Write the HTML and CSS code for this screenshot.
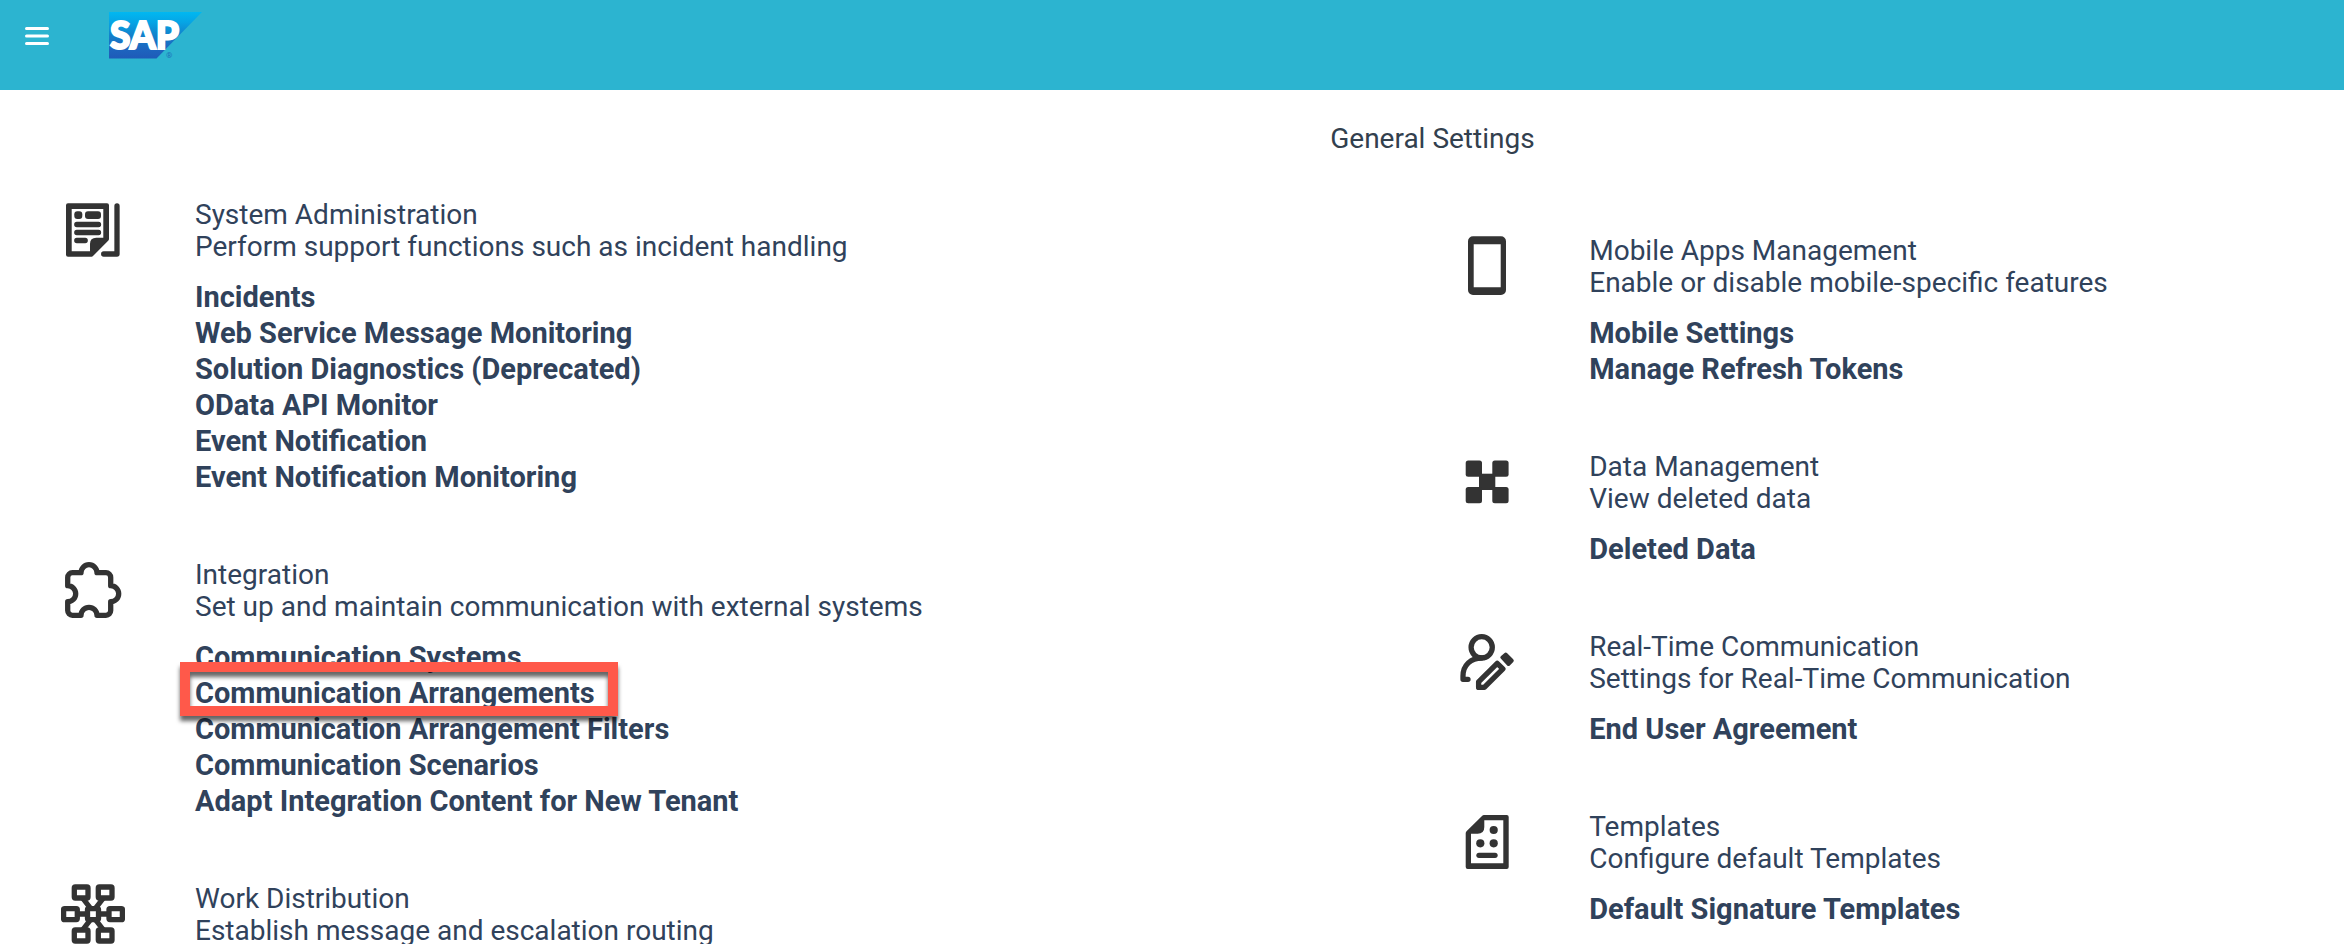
FILE: index.html
```html
<!DOCTYPE html>
<html lang="en">
<head>
<meta charset="utf-8">
<title>Administrator</title>
<link rel="stylesheet" href="styles.css">
</head>
<body>
<header class="shell">
  <button class="menu" type="button" aria-label="Menu">
    <svg width="24" height="18" viewBox="0 0 24 18" fill="none" stroke="currentColor" stroke-width="3" stroke-linecap="round"><path d="M1.500 1.500h21M1.500 9h21M1.500 16.500h21"/></svg>
  </button>
  <a class="logo" href="#" aria-label="SAP">
    <svg width="94" height="48" viewBox="0 0 94 48">
      <defs><linearGradient id="sap" x1="0" y1="0" x2="0" y2="1"><stop offset="0" stop-color="#00b8f1"/><stop offset=".22" stop-color="#06a5e5"/><stop offset=".5" stop-color="#1281cb"/><stop offset=".8" stop-color="#1d65bf"/><stop offset="1" stop-color="#1f5bb8"/></linearGradient></defs>
      <path d="M0 0h93L47.500 46.500H0z" fill="url(#sap)"/>
      <text class="logo-word" x="1" y="37">SAP</text>
      <text class="logo-mark" x="57" y="46">®</text>
    </svg>
  </a>
</header>
<main class="settings">
  <div class="column">
    <section class="group">
      <svg class="icon" viewBox="0 0 64 64">
        <path fill-rule="evenodd" d="M7 5.300h39a2 2 0 0 1 2 2V41a2 2 0 0 1-.6 1.400L32 58a2 2 0 0 1-1.400.7H7a2 2 0 0 1-2-2V7.300a2 2 0 0 1 2-2zM10.700 11v42.300H29V46q0-6.300 6.300-6.300h7V11z"/>
        <rect x="13.300" y="13.300" width="8" height="7.700" rx="3"/><rect x="24" y="13.300" width="16" height="7.700" rx="3"/>
        <path class="line" d="M15.800 26.500h21.700M15.800 34.500h21.700M15.800 42.500h8.400M56 8v48H42.700"/>
      </svg>
      <div class="body">
        <h2 class="title">System Administration</h2>
        <p class="desc">Perform support functions such as incident handling</p>
        <ul class="links">
          <li><a href="#">Incidents</a></li>
          <li><a href="#">Web Service Message Monitoring</a></li>
          <li><a href="#">Solution Diagnostics (Deprecated)</a></li>
          <li><a href="#">OData API Monitor</a></li>
          <li><a href="#">Event Notification</a></li>
          <li><a href="#">Event Notification Monitoring</a></li>
        </ul>
      </div>
    </section>
    <section class="group">
      <svg class="icon" viewBox="0 0 64 64">
        <path class="line" d="M11.400 14.700H20A8 8 0 0 1 36 14.700H45a4.700 4.700 0 0 1 4.700 4.700V27.700A8 8 0 0 1 49.700 43.700V52.600a4.700 4.700 0 0 1-4.700 4.700H36A8 8 0 0 0 20 57.300H11.400a4.700 4.700 0 0 1-4.700-4.700V43.700A8 8 0 0 0 6.700 27.700V19.400a4.700 4.700 0 0 1 4.700-4.700z"/>
      </svg>
      <div class="body">
        <h2 class="title">Integration</h2>
        <p class="desc">Set up and maintain communication with external systems</p>
        <ul class="links">
          <li><a href="#">Communication Systems</a></li>
          <li class="marked"><a href="#">Communication Arrangements</a></li>
          <li><a href="#">Communication Arrangement Filters</a></li>
          <li><a href="#">Communication Scenarios</a></li>
          <li><a href="#">Adapt Integration Content for New Tenant</a></li>
        </ul>
      </div>
    </section>
    <section class="group">
      <svg class="icon" viewBox="0 0 64 64">
        <path class="line" d="M20 14L32 29.500L44 14M20 50L32 34.500L44 50M16 32h32"/>
        <g class="nodes">
          <rect x="13.300" y="5" width="13.700" height="11" rx="1"/><rect x="37.300" y="5" width="13.700" height="11" rx="1"/>
          <rect x="2.600" y="26.600" width="13.700" height="11" rx="1"/><rect x="48" y="26.600" width="13.400" height="11" rx="1"/>
          <rect x="26.500" y="26.600" width="11" height="11" rx="1"/>
          <rect x="13.300" y="48" width="13.700" height="11" rx="1"/><rect x="37.300" y="48" width="13.700" height="11" rx="1"/>
        </g>
      </svg>
      <div class="body">
        <h2 class="title">Work Distribution</h2>
        <p class="desc">Establish message and escalation routing</p>
      </div>
    </section>
  </div>
  <div class="column column-general">
    <h1 class="heading">General Settings</h1>
    <section class="group">
      <svg class="icon" viewBox="0 0 64 64">
        <path fill-rule="evenodd" d="M18 2.300h28a5 5 0 0 1 5 5V56a5 5 0 0 1-5 5H18a5 5 0 0 1-5-5V7.300a5 5 0 0 1 5-5zM18.700 10.300v43h27v-43z"/>
      </svg>
      <div class="body">
        <h2 class="title">Mobile Apps Management</h2>
        <p class="desc">Enable or disable mobile-specific features</p>
        <ul class="links">
          <li><a href="#">Mobile Settings</a></li>
          <li><a href="#">Manage Refresh Tokens</a></li>
        </ul>
      </div>
    </section>
    <section class="group">
      <svg class="icon" viewBox="0 0 64 64">
        <rect x="10.700" y="10.400" width="16.300" height="16.300" rx="2.500"/><rect x="37.300" y="10.400" width="16.300" height="16.300" rx="2.500"/>
        <rect x="24" y="23.700" width="16.300" height="16.300"/>
        <rect x="10.700" y="37" width="16.300" height="16.300" rx="2.500"/><rect x="37.300" y="37" width="16.300" height="16.300" rx="2.500"/>
      </svg>
      <div class="body">
        <h2 class="title">Data Management</h2>
        <p class="desc">View deleted data</p>
        <ul class="links">
          <li><a href="#">Deleted Data</a></li>
        </ul>
      </div>
    </section>
    <section class="group">
      <svg class="icon" viewBox="0 0 64 64">
        <circle class="line" cx="26.700" cy="17.300" r="10.600"/>
        <path class="line" d="M13 49.300H8V46C8 35 16 28 26.700 28M23.600 57.400V51.800L42.200 33.300L47.900 38.900L29.300 57.400z"/>
        <path d="M49.300 23.200q1.400-1.400 2.900 0l6 6q1.400 1.400 0 2.900l-3.400 3.400q-1.400 1.100-2.600 0l-6.400-6.900q-1.100-1.200 0-2.300z"/>
      </svg>
      <div class="body">
        <h2 class="title">Real-Time Communication</h2>
        <p class="desc">Settings for Real-Time Communication</p>
        <ul class="links">
          <li><a href="#">End User Agreement</a></li>
        </ul>
      </div>
    </section>
    <section class="group">
      <svg class="icon" viewBox="0 0 64 64">
        <path fill-rule="evenodd" d="M29 5h22.700a2 2 0 0 1 2 2v50a2 2 0 0 1-2 2h-39a2 2 0 0 1-2-2V23.300a3 3 0 0 1 .8-2L27 6a3 3 0 0 1 2-1zM29.300 10.300V17q0 6.700-6.700 6.700H16v29.600h32.300v-43z"/>
        <circle cx="38.700" cy="20" r="4.100"/><circle cx="25.300" cy="33.300" r="4.100"/><circle cx="38.700" cy="33.300" r="4.100"/>
        <path class="line" d="M24 45.300h16"/>
      </svg>
      <div class="body">
        <h2 class="title">Templates</h2>
        <p class="desc">Configure default Templates</p>
        <ul class="links">
          <li><a href="#">Default Signature Templates</a></li>
        </ul>
      </div>
    </section>
  </div>
</main>
</body>
</html>
```
FILE: styles.css
```css
*, *::after { box-sizing: border-box; }

body {
  margin: 0;
  height: 100vh;
  overflow: hidden;
  background: #fff;
  color: #30425b;
  font-family: Roboto, "Liberation Sans", sans-serif;
  font-size: 28px;
  line-height: 32px;
}

h1, h2, p, ul { margin: 0; padding: 0; font-size: inherit; font-weight: 400; }

.shell {
  display: flex;
  align-items: flex-start;
  gap: 60px;
  height: 90px;
  padding: 12px 25px;
  background: #2cb4d0;
}

.menu {
  display: flex;
  align-items: center;
  width: 24px;
  height: 48px;
  padding: 0;
  border: 0;
  background: none;
  color: #fff;
}

.logo { display: block; height: 48px; }
.logo svg { display: block; }
.logo-word { font-family: Lato, sans-serif; font-weight: 900; font-size: 37px; fill: #fff; stroke: #fff; stroke-width: 2px; }
.logo-mark { font-size: 8px; fill: #1d6fb8; }

.settings {
  display: grid;
  grid-template-columns: 1135fr 865fr;
}

.column {
  display: flex;
  flex-direction: column;
  gap: 63px;
  padding: 108px 0 0 61px;
}

.column-general { padding: 33px 0 0 125px; }

.heading {
  margin: 0 0 16px -125px;
  color: #32404e;
}

.group { display: flex; gap: 70px; }
.body { padding-top: 1px; }

.icon { flex: none; width: 64px; height: 64px; fill: #333; }
.line { fill: none; stroke: #333; stroke-width: 5.300; stroke-linecap: round; stroke-linejoin: round; }
.nodes { fill: #fff; stroke: #333; stroke-width: 5.300; }

.links { margin-top: 16px; list-style: none; font-size: 29px; line-height: 36px; }
.links a { color: inherit; font-weight: 700; text-decoration: none; }

.marked { position: relative; }
.marked::after {
  content: "";
  position: absolute;
  top: -13px;
  left: -15px;
  width: 438px;
  height: 54px;
  border: 10px solid #ff594a;
  filter: drop-shadow(0 5px 2px rgba(0, 0, 0, .6));
}
```
